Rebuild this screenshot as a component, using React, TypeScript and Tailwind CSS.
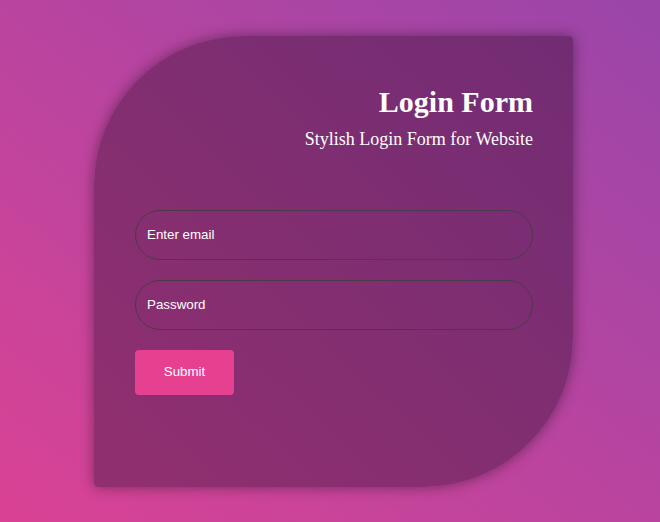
export default function App() {
  return (
    <div className="flex h-[522px] w-full items-center justify-center bg-gradient-to-tr from-[#da4294] via-[#b9449f] to-[#9a45a9] pl-[7px]">
      <div className="h-[451px] w-[479px] rounded-[4px] rounded-tl-[150px] rounded-br-[150px] bg-gradient-to-tr from-[#912f6f] to-[#722c73] pl-[41px] pr-[40px] pt-[48px] shadow-[0_0_14px_rgba(0,0,0,0.4)]">
        <div className="text-right text-white font-['Liberation_Serif',serif]">
          <h1 className="text-[30px] font-bold leading-[36px]">Login Form</h1>
          <p className="mt-[8px] text-[18px] leading-[22px]">Stylish Login Form for Website</p>
        </div>
        <form className="mt-[60px] flex flex-col font-['Liberation_Sans',Arial,sans-serif]">
          <input
            type="email"
            placeholder="Enter email"
            className="h-[50px] w-full rounded-full border border-[#4b3a47] bg-transparent px-[11px] text-[13.333px] text-white outline-none placeholder:text-white"
          />
          <input
            type="password"
            placeholder="Password"
            className="mt-[20px] h-[50px] w-full rounded-full border border-[#4b3a47] bg-transparent px-[11px] text-[13.333px] text-white outline-none placeholder:text-white"
          />
          <div className="mt-[20px]">
            <button
              type="button"
              className="h-[45px] w-[99px] rounded-[4px] bg-[#e64090] text-[13.333px] text-white"
            >
              Submit
            </button>
          </div>
        </form>
      </div>
    </div>
  );
}
